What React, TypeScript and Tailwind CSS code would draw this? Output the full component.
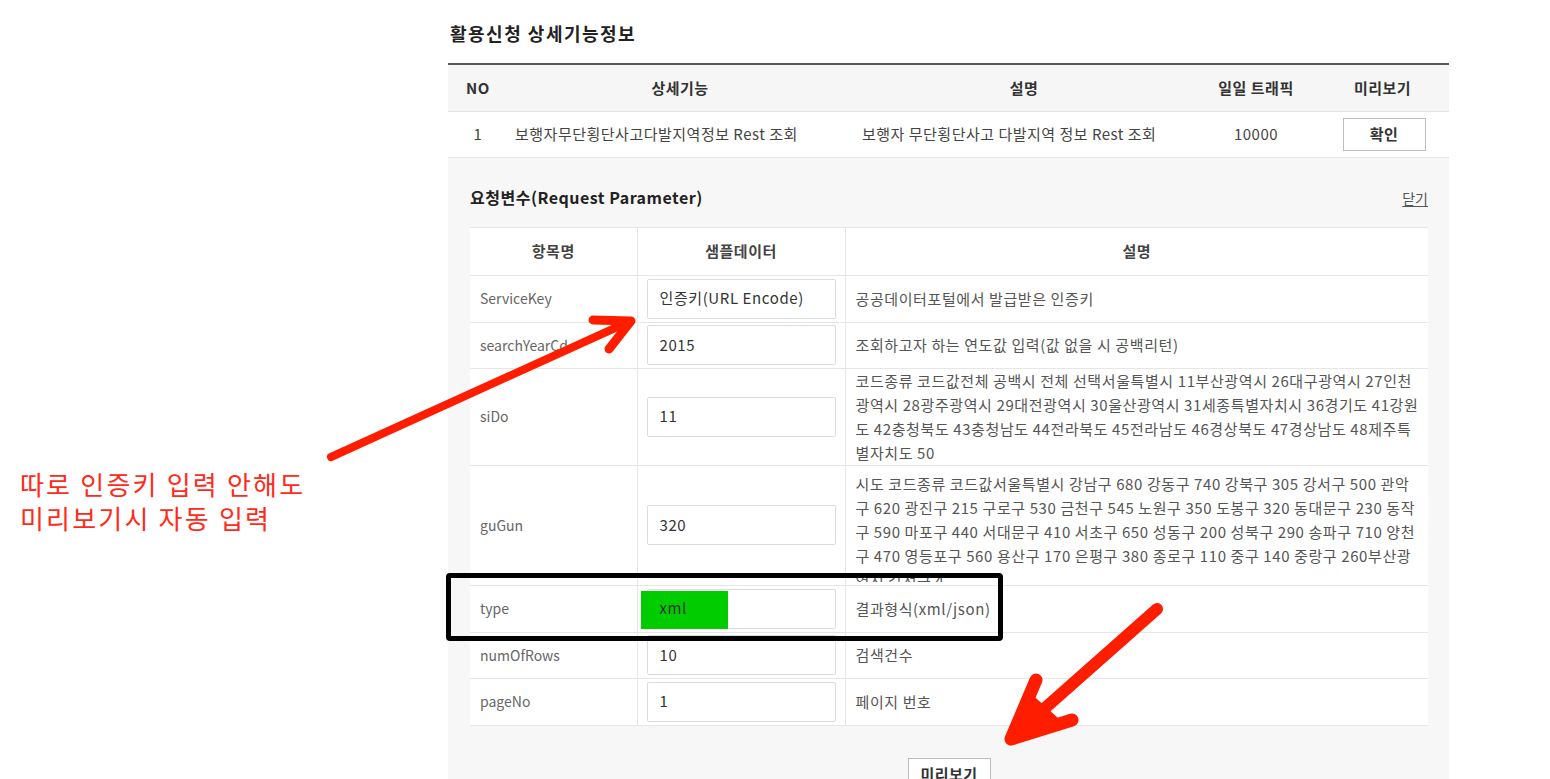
import React from "react";

const font = { fontFamily: '"Noto Sans CJK KR", "Noto Sans", sans-serif' };

type Param = {
  name: string;
  sample: string;
  desc: string[];
  h: string;
  clip?: boolean;
  highlight?: boolean;
};

const params: Param[] = [
  { name: "ServiceKey", sample: "인증키(URL Encode)", desc: ["공공데이터포털에서 발급받은 인증키"], h: "h-[47px]" },
  { name: "searchYearCd", sample: "2015", desc: ["조회하고자 하는 연도값 입력(값 없을 시 공백리턴)"], h: "h-[46px]" },
  {
    name: "siDo",
    sample: "11",
    desc: [
      "코드종류 코드값전체 공백시 전체 선택서울특별시 11부산광역시 26대구광역시 27인천",
      "광역시 28광주광역시 29대전광역시 30울산광역시 31세종특별자치시 36경기도 41강원",
      "도 42충청북도 43충청남도 44전라북도 45전라남도 46경상북도 47경상남도 48제주특",
      "별자치도 50",
    ],
    h: "h-[97px]",
  },
  {
    name: "guGun",
    sample: "320",
    desc: [
      "시도 코드종류 코드값서울특별시 강남구 680 강동구 740 강북구 305 강서구 500 관악",
      "구 620 광진구 215 구로구 530 금천구 545 노원구 350 도봉구 320 동대문구 230 동작",
      "구 590 마포구 440 서대문구 410 서초구 650 성동구 200 성북구 290 송파구 710 양천",
      "구 470 영등포구 560 용산구 170 은평구 380 종로구 110 중구 140 중랑구 260부산광",
      "역시 강서구 4",
    ],
    h: "h-[120px]",
    clip: true,
  },
  { name: "type", sample: "xml", desc: ["결과형식(xml/json)"], h: "h-[47px]", highlight: true },
  { name: "numOfRows", sample: "10", desc: ["검색건수"], h: "h-[46px]" },
  { name: "pageNo", sample: "1", desc: ["페이지 번호"], h: "h-[47px]" },
];

const SampleInput = ({ value, highlight }: { value: string; highlight?: boolean }) => (
  <div className="relative w-[189px] h-[40px] border border-[#dcdcdc] rounded-[2px] bg-white flex items-center px-[12px] text-[15px] tracking-[0.6px] text-[#333]">
    {highlight && <span className="absolute left-[-7px] top-[1px] w-[87px] h-[38px] bg-[#00cc00]" />}
    <span className="relative">{value}</span>
  </div>
);

const Overlay = () => (
  <>
    <svg className="absolute left-0 top-0 pointer-events-none" width="1550" height="779">
      <g stroke="#ff1d00" fill="none" strokeLinecap="round" strokeLinejoin="round">
        <line x1="331" y1="457" x2="626" y2="323" strokeWidth="8" />
        <polyline points="593,320 631,321 609,349" strokeWidth="9" />
        <line x1="1157" y1="609" x2="1018" y2="732" strokeWidth="12" />
        <polyline points="1036,680 1011,739 1072,720" strokeWidth="13" />
        <polygon points="1028,695 1011,739 1058,722" fill="#ff1d00" strokeWidth="6" />
      </g>
    </svg>
    <div className="absolute left-[446px] top-[573px] w-[557px] h-[68px] border-[5px] border-black rounded-[4px] pointer-events-none" />
    <div className="absolute left-[20px] top-[467px] text-[#ff2a1a] text-[26px] leading-[34px] tracking-[2.2px]">
      <div>따로 인증키 입력 안해도</div>
      <div>미리보기시 자동 입력</div>
    </div>
  </>
);

export default function App() {
  return (
    <div className="relative w-full h-[779px] bg-white overflow-hidden" style={font}>
      <div className="ml-[448px] w-[1001px] pt-[22px]">
        <h2 className="pl-[2px] h-[22px] leading-[22px] text-[18px] tracking-[1.5px] font-bold text-[#222]">활용신청 상세기능정보</h2>

        <table className="mt-[19px] w-full table-fixed border-t-2 border-[#5a5a5a] text-[15px] tracking-[0.5px] text-[#444]">
          <colgroup>
            <col className="w-[60px]" />
            <col className="w-[344px]" />
            <col className="w-[344px]" />
            <col className="w-[120px]" />
            <col className="w-[133px]" />
          </colgroup>
          <thead>
            <tr className="h-[47px] bg-[#f6f6f6] border-b border-[#e4e4e4] text-[#333]">
              <th className="font-bold">NO</th>
              <th className="font-bold">상세기능</th>
              <th className="font-bold">설명</th>
              <th className="font-bold">일일 트래픽</th>
              <th className="font-bold">미리보기</th>
            </tr>
          </thead>
          <tbody>
            <tr className="h-[46px] bg-white border-b border-[#e4e4e4]">
              <td className="text-center">1</td>
              <td className="pl-[7px] whitespace-nowrap">보행자무단횡단사고다발지역정보 Rest 조회</td>
              <td className="pl-[10px] whitespace-nowrap">보행자 무단횡단사고 다발지역 정보 Rest 조회</td>
              <td className="text-center">10000</td>
              <td className="text-center">
                <button className="w-[83px] h-[33px] border border-[#bdbdbd] bg-white font-bold text-[#333] ml-[3px]">확인</button>
              </td>
            </tr>
          </tbody>
        </table>

        <div className="bg-[#f7f7f7] px-[22px] pr-[21px] pb-[20px]">
          <div className="flex justify-between h-[69px] pt-[28px]">
            <h3 className="leading-[22px] text-[16px] tracking-[0.5px] font-bold text-[#222]">요청변수(Request Parameter)</h3>
            <a className="leading-[22px] text-[14px] text-[#555] underline underline-offset-2 mt-[1px]">닫기</a>
          </div>

          <table className="w-full table-fixed bg-white text-[15px]">
            <colgroup>
              <col className="w-[167px]" />
              <col className="w-[208px]" />
              <col className="w-[583px]" />
            </colgroup>
            <thead>
              <tr className="h-[48px] border-t border-b border-[#e6e6e6] text-[#444] tracking-[0.5px]">
                <th className="font-bold border-r border-[#e6e6e6]">항목명</th>
                <th className="font-bold border-r border-[#e6e6e6]">샘플데이터</th>
                <th className="font-bold">설명</th>
              </tr>
            </thead>
            <tbody>
              {params.map((p) => (
                <tr key={p.name} className={`${p.h} border-b border-[#e6e6e6]`}>
                  <td className="pl-[10px] text-[14px] text-[#666] border-r border-[#e6e6e6]">{p.name}</td>
                  <td className="pl-[9px] border-r border-[#e6e6e6]">
                    <SampleInput value={p.sample} highlight={p.highlight} />
                  </td>
                  <td className="pl-[10px] text-[#555] align-middle">
                    <div className={`leading-[24px] whitespace-nowrap tracking-[0.6px] ${p.clip ? "h-[110px] overflow-hidden mt-[4px]" : ""}`}>
                      {p.desc.map((line, i) => (
                        <div key={i}>{line}</div>
                      ))}
                    </div>
                  </td>
                </tr>
              ))}
            </tbody>
          </table>

          <div className="flex justify-center mt-[32px]">
            <button className="w-[83px] h-[34px] border border-[#bdbdbd] bg-white text-[15px] tracking-[0.5px] font-bold text-[#333]">미리보기</button>
          </div>
        </div>
      </div>
      <Overlay />
    </div>
  );
}
